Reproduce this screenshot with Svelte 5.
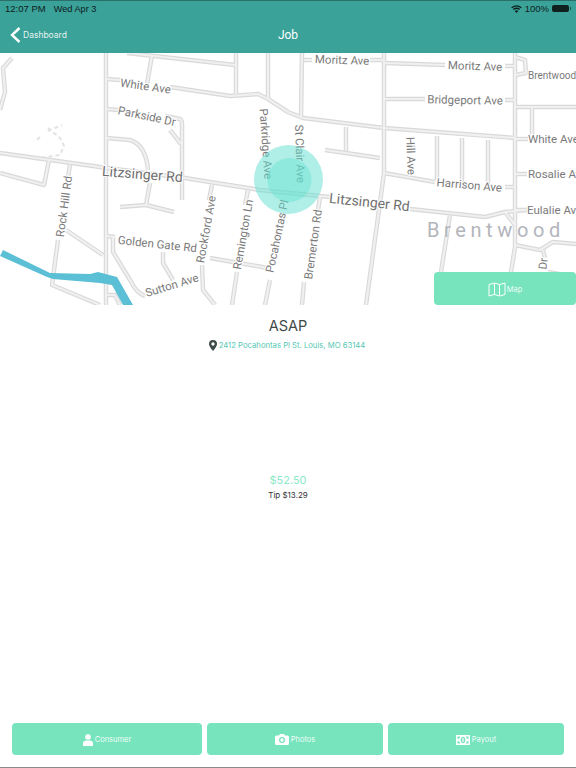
<script lang="ts">
  // road centre lines for the map, in page pixels
  const roads = [
    'M106 53V305',
    'M127 53L235 65',
    'M152 55L147 84',
    'M236 53V94',
    'M268 53V100',
    'M302 53L301 118',
    'M106 79L120 80',
    'M170 87L230 96L258 94L268 99L288 112L303 118L384 128L515 138',
    'M106 109L118 110',
    'M165 116L180 119Q182 120 182 124V200',
    'M170 130L181 144',
    'M106 138L130 140Q146 145 148 170',
    'M12 58L3 68L5 92L0 110',
    'M0 153L100 167L185 178L260 190L330 197',
    'M410 209L485 217L505 212L526 210',
    'M0 173L44 185L49 160',
    'M70 165L68 178',
    'M58 240L52 285L100 305',
    'M66 230L103 255',
    'M106 236L115 237',
    'M113 237L113 252L130 280Q137 294 145 296',
    'M163 252V263L173 280',
    'M150 183L146 205L120 207',
    'M146 205L174 212',
    'M212 185L209 200',
    'M202 265L203 290L215 305',
    'M210 258L268 268',
    'M248 190L245 205',
    'M237 272L232 305',
    'M270 280L265 305',
    'M304 282L302 305',
    'M320 197L318 210',
    'M384 53V173L366 305',
    'M304 60H312',
    'M370 60H384',
    'M384 63L445 65',
    'M505 66H515',
    'M384 99H425',
    'M505 100H515',
    'M515 53V247L511 272',
    'M516 107H576',
    'M532 107V135',
    'M346 127V151',
    'M325 150L380 158',
    'M384 173L435 182',
    'M505 187H515',
    'M437 136V180',
    'M462 138V184',
    'M488 140V186',
    'M515 139H528',
    'M515 174H527',
    'M515 210H527',
    'M450 215L441 272',
    'M515 245L540 250L553 242L576 244',
    'M543 250L545 258',
    'M505 212L515 225',
    'M515 57L525 60L526 73L516 75',
    'M106 295H115L120 305',
    'M548 272L576 277',
  ];

  // x, y, angle, text (centred on x)
  const labels = [
    [342, 64, 2, 'Moritz Ave'],
    [475, 70, 2, 'Moritz Ave'],
    [465, 104, 1, 'Bridgeport Ave'],
    [145, 90, 8, 'White Ave'],
    [146, 120, 12, 'Parkside Dr'],
    [262, 144, 86, 'Parkridge Ave'],
    [296, 154, 88, 'St Clair Ave'],
    [407, 156, 88, 'Hill Ave'],
    [469, 189, 5, 'Harrison Ave'],
    [68, 207, -82, 'Rock Hill Rd'],
    [210, 230, -80, 'Rockford Ave'],
    [247, 235, -80, 'Remington Ln'],
    [281, 237, -78, 'Pocahontas Pl'],
    [317, 245, -82, 'Bremerton Rd'],
    [157, 248, 6, 'Golden Gate Rd'],
    [173, 289, -17, 'Sutton Ave'],
    [547, 264, -85, 'Dr'],
  ];

  // labels that run off the right edge, anchored at their start
  const edgeLabels = [
    [528, 143, 'White Ave'],
    [528, 178, 'Rosalie Ave'],
    [527, 214, 'Eulalie Ave'],
  ];
</script>

<div class="page">
  <header class="head">
    <div class="status">
      <span>12:07 PM</span>
      <span class="date">Wed Apr 3</span>
      <span class="status-right">
        <svg width="11" height="8" viewBox="0 0 11 8" fill="none" stroke="#10201e" stroke-width="1.300">
          <path d="M.6 2.800Q5.500-1 10.400 2.800M2.300 4.500Q5.500 2 8.700 4.500" />
          <path d="M5.500 8L3.700 6Q5.500 4.600 7.300 6Z" fill="#10201e" stroke="none" />
        </svg>
        <span>100%</span>
        <span class="battery"></span>
      </span>
    </div>
    <nav class="nav">
      <span class="back">
        <svg width="11" height="16" viewBox="0 0 11 16"><path d="M9.500 1L2 8l7.500 7" fill="none" stroke="#fff" stroke-width="2.400"/></svg>
        Dashboard
      </span>
      <span class="title">Job</span>
    </nav>
  </header>

  <section class="map">
    <svg class="map-art" width="576" height="252" viewBox="0 53 576 252">
      <path d="M48 131L62 125M40 137L36 141M48 128L60 138L64 146L60 155L40 158" class="trail" />
      {#each roads as d}<path {d} class="road-edge" />{/each}
      {#each roads as d}<path {d} class="road-fill" />{/each}
      <path class="river" d="M3 250L50 273L90 274L98 272L117 277L133 305H123L112 285L100 283L53 279L47 277L0 256Z" />

      {#each labels as [x, y, a, t]}
        <text class="lbl" text-anchor="middle" transform="translate({x} {y}) rotate({a})">{t}</text>
      {/each}
      {#each edgeLabels as [x, y, t]}
        <text class="lbl" {x} {y}>{t}</text>
      {/each}
      <text class="lbl small" x="528" y="79">Brentwood</text>
      <text class="lbl big" text-anchor="middle" transform="translate(142 179) rotate(4.500)">Litzsinger Rd</text>
      <text class="lbl big" text-anchor="middle" transform="translate(369 207) rotate(6)">Litzsinger Rd</text>
      <text class="place" x="427" y="237">Brentwood</text>

      <circle cx="288.500" cy="179.500" r="34.500" class="halo" />
      <circle cx="289.500" cy="180" r="22" class="halo inner" />
    </svg>

    <button class="btn map-btn" type="button">
      <svg width="18" height="15" viewBox="0 0 18 15" fill="none" stroke="#fff" stroke-width="1">
        <path d="M1 2.500L6.500 1L11.500 2.500L17 1V12.500L11.500 14L6.500 12.500L1 14Z" />
        <path d="M6.500 1V12.500M11.500 2.500V14" />
      </svg>
      Map
    </button>
  </section>

  <main class="job">
    <h1>ASAP</h1>
    <p class="addr">
      <svg width="8" height="11" viewBox="0 0 8 11"><path fill-rule="evenodd" d="M4 0a4 4 0 0 1 4 4c0 2.500-4 7-4 7S0 6.500 0 4a4 4 0 0 1 4-4Zm0 2.300a1.700 1.700 0 1 0 0 3.400 1.700 1.700 0 0 0 0-3.400Z" fill="#3c4a48"/></svg>
      2412 Pocahontas Pl St. Louis, MO 63144
    </p>
    <div class="pay">
      <div class="amount">$52.50</div>
      <div class="tip">Tip $13.29</div>
    </div>
  </main>

  <footer class="actions">
    <button class="btn consumer" type="button">
      <svg width="10" height="12" viewBox="0 0 10 12" fill="#fff"><circle cx="5" cy="3" r="2.800"/><path d="M0 12V9q0-2 2.500-2.500h5Q10 7 10 9v3Z"/></svg>
      Consumer
    </button>
    <button class="btn photos" type="button">
      <svg width="14" height="11" viewBox="0 0 14 11"><path fill="#fff" fill-rule="evenodd" d="M1.500 1.500H4L5 0h4l1 1.500h2.500A1.500 1.500 0 0 1 14 3v6.500a1.500 1.500 0 0 1-1.500 1.500h-11A1.500 1.500 0 0 1 0 9.500V3a1.500 1.500 0 0 1 1.500-1.500ZM7 3a3 3 0 1 0 0 6 3 3 0 0 0 0-6Zm0 1.300a1.700 1.700 0 1 1 0 3.400 1.700 1.700 0 0 1 0-3.400Z"/></svg>
      Photos
    </button>
    <button class="btn payout" type="button">
      <svg width="14" height="10" viewBox="0 0 14 10"><path fill="#fff" fill-rule="evenodd" d="M0 0h14v10H0ZM4 1.500H1.500V4A2.500 2.500 0 0 0 4 1.500Zm6 0A2.500 2.500 0 0 0 12.500 4V1.500ZM7 1.800C5.600 1.800 4.600 3.200 4.600 5s1 3.200 2.400 3.200S9.400 6.800 9.400 5 8.400 1.800 7 1.800ZM1.500 6v2.500H4A2.500 2.500 0 0 0 1.500 6Zm11 0A2.500 2.500 0 0 0 10 8.500h2.500Z"/><path fill="#fff" d="M6.400 3h1.200v4H6.400z"/></svg>
      Payout
    </button>
  </footer>
</div>

<style>
  :global(body) {
    margin: 0;
    background: #fff;
  }

  .page {
    display: flex;
    flex-direction: column;
    width: 576px;
    height: 768px;
    overflow: hidden;
    box-sizing: border-box;
    border-bottom: 1px solid #8a8a8a;
    font-family: Inter, "Liberation Sans", sans-serif;
  }

  .head {
    flex: none;
    height: 53px;
    background: #3aa298;
    border-top: 1px solid #2a6f6a;
    box-sizing: border-box;
  }

  .status {
    display: flex;
    align-items: center;
    height: 15px;
    padding: 0 5px;
    font-family: "Liberation Sans", sans-serif;
    font-size: 9.500px;
    color: #10201e;
  }

  .date {
    margin-left: 8px;
    font-size: 9.200px;
  }

  .status-right {
    display: flex;
    align-items: center;
    gap: 3px;
    margin-left: auto;
  }

  .battery {
    position: relative;
    width: 17px;
    height: 7px;
    margin-right: 2px;
    background: #10201e;
    border-radius: 2px;
  }

  .battery::after {
    content: "";
    position: absolute;
    right: -2px;
    top: 2px;
    width: 1px;
    height: 3px;
    background: #10201e;
    opacity: 0.6;
  }

  .nav {
    position: relative;
    display: flex;
    align-items: center;
    justify-content: center;
    height: 37px;
    color: #fff;
  }

  .back {
    position: absolute;
    left: 10px;
    top: 10px;
    display: flex;
    align-items: center;
    gap: 2px;
    padding-top: 1px;
    font-size: 8.500px;
    color: rgba(255, 255, 255, 0.9);
  }

  .title {
    font-family: Roboto, sans-serif;
    font-size: 12px;
  }

  .map {
    position: relative;
    flex: none;
    height: 252px;
    overflow: hidden;
  }

  .map-art {
    display: block;
  }

  .road-edge,
  .road-fill,
  .trail {
    fill: none;
    stroke-linejoin: round;
  }

  .road-edge {
    stroke: #d9d9d9;
    stroke-width: 4.500;
  }

  .road-fill {
    stroke: #f0f0f0;
    stroke-width: 2.200;
  }

  .trail {
    stroke: #e3e3e3;
    stroke-width: 2;
    stroke-dasharray: 4 3;
  }

  .river {
    fill: #5bbfd5;
  }

  .lbl {
    font-family: Roboto, sans-serif;
    font-size: 11.500px;
    fill: #7a7a7a;
    paint-order: stroke;
    stroke: #fff;
    stroke-width: 2px;
  }

  .small {
    font-size: 10px;
  }

  .big {
    font-size: 14px;
    fill: #6e6e6e;
  }

  .place {
    font-family: Roboto, sans-serif;
    font-size: 20px;
    letter-spacing: 4.600px;
    fill: #b3b5bb;
  }

  .halo {
    fill: #5fe0cf;
    fill-opacity: 0.5;
  }

  .inner {
    fill-opacity: 0.4;
  }

  .btn {
    display: flex;
    align-items: center;
    justify-content: center;
    gap: 2px;
    padding: 1px 0 0;
    height: 33px;
    border: none;
    border-radius: 4px;
    background: #77e4bd;
    color: rgba(255, 255, 255, 0.92);
    font-family: Inter, "Liberation Sans", sans-serif;
    font-size: 7.500px;
  }

  .map-btn {
    position: absolute;
    left: 434px;
    top: 219px;
    width: 142px;
    gap: 1px;
  }

  .job {
    flex: 1;
    display: flex;
    flex-direction: column;
    align-items: center;
    min-height: 0;
  }

  h1 {
    margin: 12px 0 0;
    font-family: Inter, sans-serif;
    font-size: 14.500px;
    line-height: 17px;
    font-weight: 400;
    color: #3f4a49;
  }

  .addr {
    display: flex;
    align-items: center;
    gap: 2px;
    margin: 6px 0 0 -2px;
    font-size: 7.700px;
    line-height: 11px;
    color: #55c8b4;
  }

  .pay {
    margin-top: 122px;
    text-align: center;
  }

  .amount {
    font-size: 11px;
    line-height: 14px;
    color: #8de8c8;
  }

  .tip {
    margin-top: 3px;
    font-size: 8px;
    line-height: 11px;
    color: #333;
  }

  .actions {
    flex: none;
    display: flex;
    gap: 5px;
    padding: 0 12px 12px;
  }

  .actions .btn {
    height: 32px;
  }

  .consumer {
    width: 190px;
  }

  .photos,
  .payout {
    width: 176px;
  }
</style>
